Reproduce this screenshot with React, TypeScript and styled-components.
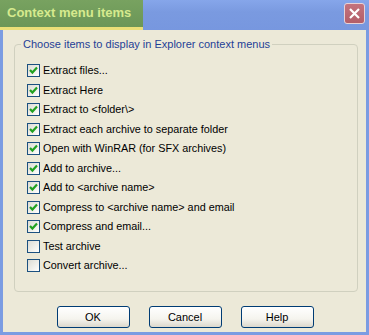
import React, { useState } from 'react'
import styled, { createGlobalStyle } from 'styled-components'

const GlobalStyle = createGlobalStyle`
  html, body {
    margin: 0;
    padding: 0;
    background: #ece9d8;
  }
  body {
    font-family: "Liberation Sans", Arial, sans-serif;
  }
`

const Window = styled.div`
  width: 369px;
  height: 335px;
  display: flex;
  flex-direction: column;
  background: #7b9ce2;
  box-sizing: border-box;
  overflow: hidden;
`

const TitleBar = styled.div`
  height: 30px;
  display: flex;
  align-items: stretch;
  justify-content: space-between;
  background: linear-gradient(#86a6ea, #7a9ae0 40%, #7797df);
`

// yellow marker that somebody dragged over the caption
const Highlight = styled.div`
  width: 143px;
  display: flex;
  align-items: center;
  box-sizing: border-box;
  padding: 0 0 2px 7px;
  background: linear-gradient(#78a260, #6b9657);
  border-bottom: 3px solid #eadf78;
`

const Caption = styled.span`
  font-size: 13px;
  font-weight: bold;
  color: #d6ea8e;
  white-space: nowrap;
`

const CloseButton = styled.button`
  width: 21px;
  height: 21px;
  margin: 3px 4px 0 0;
  padding: 0;
  border: 1px solid #e8d2d6;
  border-radius: 3px;
  background: linear-gradient(#c4737d, #b35e69);
  display: flex;
  align-items: center;
  justify-content: center;
`

const Client = styled.div`
  flex: 1;
  margin: 0 3px 3px 3px;
  background: #ece9d8;
  display: flex;
  flex-direction: column;
`

const GroupBox = styled.fieldset`
  margin: 7px 8px 0 11px;
  padding: 0 0 12px 6px;
  border: 1px solid #d0d0bf;
  border-radius: 4px;
  min-width: 0;
`

const Legend = styled.legend`
  padding: 0 2px;
  font-size: 11px;
  line-height: 14px;
  color: #1f3f96;
`

const ItemList = styled.div`
  display: flex;
  flex-direction: column;
  margin: 13px 0 0 6px;
`

const ItemRow = styled.label`
  height: 19.5px;
  display: flex;
  align-items: flex-start;
  gap: 3px;
  font-size: 10.8px;
  line-height: 13px;
  color: #000;
`

const Box = styled.span`
  width: 13px;
  height: 13px;
  box-sizing: border-box;
  border: 1px solid #1c5180;
  background: linear-gradient(135deg, #dcdcd4, #f4f4f0 70%, #ffffff);
  display: flex;
  align-items: center;
  justify-content: center;
  flex-shrink: 0;
`

const ButtonRow = styled.div`
  display: flex;
  justify-content: center;
  gap: 19px;
  margin-top: 14px;
  padding-left: 1px;
`

const PushButton = styled.button`
  width: 73px;
  height: 22px;
  border: 1px solid #003c74;
  border-radius: 3px;
  background: linear-gradient(#ffffff, #f5f4ee 60%, #dcd8cc);
  font-family: "Liberation Sans", Arial, sans-serif;
  font-size: 11px;
  color: #000;
  padding: 0;
`

const items: { label: string; checked: boolean }[] = [
  { label: 'Extract files...', checked: true },
  { label: 'Extract Here', checked: true },
  { label: 'Extract to <folder\\>', checked: true },
  { label: 'Extract each archive to separate folder', checked: true },
  { label: 'Open with WinRAR (for SFX archives)', checked: true },
  { label: 'Add to archive...', checked: true },
  { label: 'Add to <archive name>', checked: true },
  { label: 'Compress to <archive name> and email', checked: true },
  { label: 'Compress and email...', checked: true },
  { label: 'Test archive', checked: false },
  { label: 'Convert archive...', checked: false },
]

const Check = () => (
  <svg width="9" height="9" viewBox="0 0 9 9">
    <path d="M1 4 L3.4 6.6 L8 1.6" fill="none" stroke="#21a121" strokeWidth="2.2" />
  </svg>
)

const App: React.FC = () => {
  const [state, setState] = useState(items.map(i => i.checked))

  return (
    <>
      <GlobalStyle />
      <Window>
        <TitleBar>
          <Highlight>
            <Caption>Context menu items</Caption>
          </Highlight>
          <CloseButton>
            <svg width="13" height="13" viewBox="0 0 13 13">
              <path d="M2 2 L11 11 M11 2 L2 11" stroke="#fff" strokeWidth="2.2" />
            </svg>
          </CloseButton>
        </TitleBar>
        <Client>
          <GroupBox>
            <Legend>Choose items to display in Explorer context menus</Legend>
            <ItemList>
              {items.map((item, i) => (
                <ItemRow
                  key={item.label}
                  onClick={() => setState(s => s.map((v, j) => (j === i ? !v : v)))}
                >
                  <Box>{state[i] && <Check />}</Box>
                  {item.label}
                </ItemRow>
              ))}
            </ItemList>
          </GroupBox>
          <ButtonRow>
            <PushButton>OK</PushButton>
            <PushButton>Cancel</PushButton>
            <PushButton>Help</PushButton>
          </ButtonRow>
        </Client>
      </Window>
    </>
  )
}

export default App
